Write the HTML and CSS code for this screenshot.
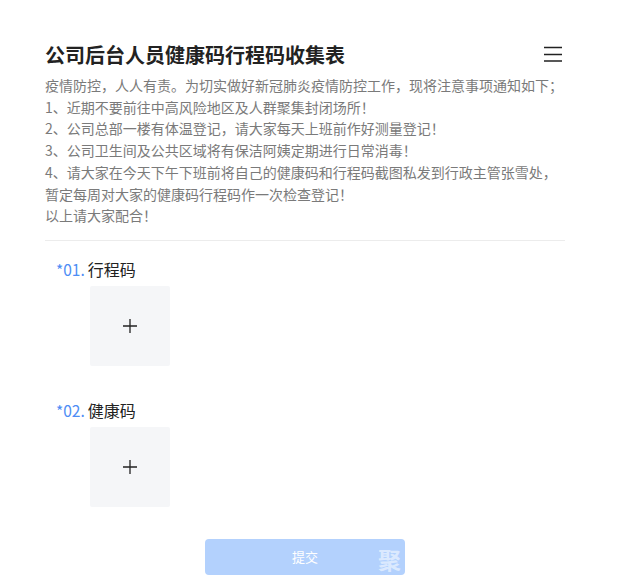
FILE: index.html
```html
<!DOCTYPE html>
<html lang="zh">
<head>
<meta charset="utf-8">
<link rel="stylesheet" href="styles.css">
</head>
<body>
<div class="page">
  <div class="header">
    <h1 class="title">公司后台人员健康码行程码收集表</h1>
    <svg class="menu" width="18" height="16" viewBox="0 0 18 16"><path d="M0 1.5H18M0 8.5H18M0 15H18" stroke="#222" stroke-width="1.5" fill="none"/></svg>
  </div>
  <div class="desc">
    <p>疫情防控，人人有责。为切实做好新冠肺炎疫情防控工作，现将注意事项通知如下；</p>
    <p>1、近期不要前往中高风险地区及人群聚集封闭场所！</p>
    <p>2、公司总部一楼有体温登记，请大家每天上班前作好测量登记！</p>
    <p>3、公司卫生间及公共区域将有保洁阿姨定期进行日常消毒！</p>
    <p>4、请大家在今天下午下班前将自己的健康码和行程码截图私发到行政主管张雪处，<br>暂定每周对大家的健康码行程码作一次检查登记！</p>
    <p>以上请大家配合！</p>
  </div>
  <div class="divider"></div>
  <div class="field">
    <div class="label"><span class="num">*01.</span><span class="name">行程码</span></div>
    <div class="upload"><svg width="16" height="16" viewBox="0 0 16 16"><path d="M8 1V15M1 8H15" stroke="#222" stroke-width="1.3"/></svg></div>
  </div>
  <div class="field">
    <div class="label"><span class="num">*02.</span><span class="name">健康码</span></div>
    <div class="upload"><svg width="16" height="16" viewBox="0 0 16 16"><path d="M8 1V15M1 8H15" stroke="#222" stroke-width="1.3"/></svg></div>
  </div>
  <div class="actions">
    <button class="submit">提交</button>
    <span class="watermark">聚</span>
  </div>
</div>
</body>
</html>
```

FILE: styles.css
```css
* { box-sizing: border-box; }
body {
  margin: 0;
  background: #fff;
  font-family: "Noto Sans CJK SC", "Noto Sans", sans-serif;
}
.page {
  width: 520px;
  margin-left: 45px;
  padding-top: 40px;
}
.header {
  display: flex;
  align-items: center;
  justify-content: space-between;
  height: 30px;
}
.title {
  margin: 0;
  font-size: 20px;
  font-weight: 700;
  color: #222;
  line-height: 30px;
}
.menu { margin-right: 3px; margin-top: -2px; }
.desc {
  margin-top: 5px;
  font-size: 14px;
  line-height: 21.7px;
  color: #7a7a7a;
  white-space: nowrap;
}
.desc p { margin: 0; }
.divider {
  height: 1px;
  background: #ececec;
  margin-top: 13px;
}
.field {
  padding-left: 11px;
  margin-top: 16px;
}
.field + .field { margin-top: 32px; }
.label {
  display: flex;
  align-items: baseline;
  height: 24px;
  line-height: 24px;
}
.num {
  color: #4d8df5;
  font-size: 15.5px;
  margin-right: 3px;
}
.name {
  color: #222;
  font-size: 16px;
}
.upload {
  margin-left: 34px;
  margin-top: 5px;
  width: 80px;
  height: 80px;
  background: #f5f6f8;
  border-radius: 2px;
  display: flex;
  align-items: center;
  justify-content: center;
}
.actions {
  position: relative;
  display: flex;
  justify-content: center;
  margin-top: 32px;
}
.submit {
  width: 200px;
  height: 36px;
  border: none;
  border-radius: 4px;
  background: #b3d1fd;
  color: #fff;
  font-family: "Noto Sans CJK SC", sans-serif;
  font-size: 13px;
  padding: 0;
}
.watermark {
  position: absolute;
  left: 333px;
  top: 6px;
  font-size: 23px;
  font-weight: 700;
  line-height: 28px;
  color: rgba(255,255,255,0.55);
}
```
